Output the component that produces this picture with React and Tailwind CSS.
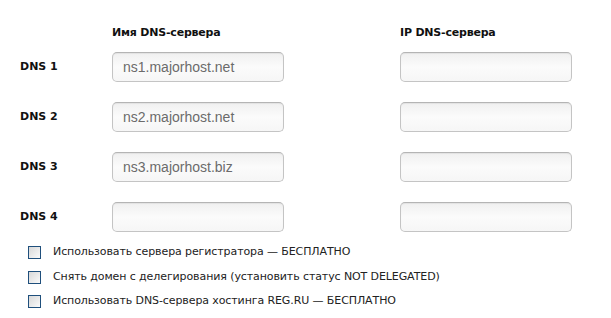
import React from "react";

const rows = [
  { label: "DNS 1", name: "ns1.majorhost.net" },
  { label: "DNS 2", name: "ns2.majorhost.net" },
  { label: "DNS 3", name: "ns3.majorhost.biz" },
  { label: "DNS 4", name: "" },
];

const checks = [
  "Использовать сервера регистратора — БЕСПЛАТНО",
  "Снять домен с делегирования (установить статус NOT DELEGATED)",
  "Использовать DNS-сервера хостинга REG.RU — БЕСПЛАТНО",
];

function Field({ value }) {
  return (
    <div className="w-[172px] h-[30px] rounded-[5px] border border-[#c4c4c4] border-t-[#b4b4b4] bg-gradient-to-b from-[#f0f0f0] via-[#fbfbfb] to-[#f6f6f6] shadow-[inset_0_1px_1px_rgba(0,0,0,0.06)] flex items-center pl-[10px] text-[14px] text-[#6b6b6b] font-['Liberation_Sans',Arial,sans-serif]">
      {value}
    </div>
  );
}

export default function App() {
  return (
    <div className="w-[611px] h-[318px] bg-white font-['DejaVu_Sans',Verdana,sans-serif] text-[#111]">
      <div className="flex pt-[25px] h-[52px]">
        <div className="w-[112px]" />
        <div className="w-[288px] text-[11px] font-bold tracking-[-0.2px]">Имя DNS-сервера</div>
        <div className="text-[11px] font-bold tracking-[-0.2px]">IP DNS-сервера</div>
      </div>
      <div className="flex flex-col gap-[20px]">
        {rows.map((r) => (
          <div key={r.label} className="flex items-center h-[30px]">
            <div className="w-[112px] pl-[20px] text-[11px] font-bold">{r.label}</div>
            <Field value={r.name} />
            <div className="w-[116px]" />
            <Field value="" />
          </div>
        ))}
      </div>
      <div className="flex flex-col gap-[11.5px] pt-[14px] pl-[28px]">
        {checks.map((c) => (
          <label key={c} className="flex items-center h-[13px] gap-[12px] text-[11px] text-[#222] tracking-[-0.1px]">
            <span className="w-[13px] h-[13px] border border-[#1f4f7c] bg-gradient-to-br from-[#d8d8d8] to-[#fafafa] shrink-0" />
            <span className="whitespace-nowrap">{c}</span>
          </label>
        ))}
      </div>
    </div>
  );
}
